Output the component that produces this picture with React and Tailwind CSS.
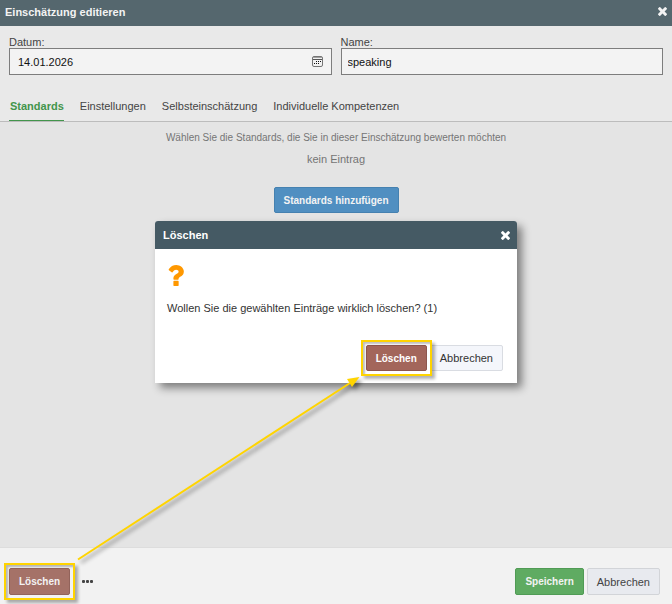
import React from "react";

function CloseIcon() {
  return (
    <svg viewBox="302 366 1188 1188" className="size-[9px]" fill="currentColor" aria-hidden="true">
      <path d="M1490 1322q0 40-28 68l-136 136q-28 28-68 28t-68-28l-294-294-294 294q-28 28-68 28t-68-28l-136-136q-28-28-28-68t28-68l294-294-294-294q-28-28-28-68t28-68l136-136q28-28 68-28t68 28l294 294 294-294q28-28 68-28t68 28l136 136q28 28 28 68t-28 68l-294 294 294 294q28 28 28 68z" />
    </svg>
  );
}

function QuestionIcon() {
  return (
    <svg viewBox="384 256 1024 1280" className="h-[21px] w-[17px] text-[#ff9800]" fill="currentColor" aria-hidden="true">
      <path d="M1088 1256v240q0 16-12 28t-28 12h-240q-16 0-28-12t-12-28v-240q0-16 12-28t28-12h240q16 0 28 12t12 28zm316-600q0 54-15.5 101t-35 76.5-55 59.5-57.5 43.5-61 35.5q-41 23-68.5 65t-27.5 67q0 17-12 32.5t-28 15.5h-240q-15 0-25.5-18.5t-10.5-37.5v-45q0-83 65-156.5t143-108.5q59-27 84-56t25-76q0-42-46.5-74t-107.5-32q-65 0-108 29-35 25-107 115-13 16-31 16-12 0-25-8l-164-125q-13-10-15.5-25t5.5-28q160-266 464-266 80 0 161 31t146 83 106 127.5 41 158.5z" />
    </svg>
  );
}

function CalendarIcon() {
  return (
    <svg viewBox="0 0 11 11" className="size-[11px]" aria-hidden="true">
      <rect x="0.5" y="0.5" width="10" height="10" rx="1.5" fill="#f2f2f2" stroke="#757575" />
      <path d="M1 1.5h9" stroke="#a0a0a0" />
      <path d="M1 3.5h9" stroke="#555" />
      <path d="M4 5.5h1M6 5.5h1M8 5.5h1M2 7.5h1M4 7.5h1M6 7.5h1" stroke="#111" />
    </svg>
  );
}

function Highlight({ children }) {
  return (
    <div className="relative">
      {children}
      <span className="pointer-events-none absolute -inset-[5px] border-2 border-[#ffd400] shadow-[3px_3px_3px_rgba(0,0,0,0.3),inset_2px_2px_2px_rgba(0,0,0,0.25)]" />
    </div>
  );
}

const button = "rounded-[2px] border px-[9px] leading-4";
const filled = `${button} pt-px text-[10px] font-bold`;
const field = "h-[27px] w-full border border-[#7d7d7d] bg-[#f3f3f3] text-[11px] text-[#111] outline-none";

const tabs = ["Standards", "Einstellungen", "Selbsteinschätzung", "Individuelle Kompetenzen"];

export default function App() {
  return (
    <div className="relative flex min-h-screen flex-col bg-[#e9e9e9] font-['Liberation_Sans',Arial,sans-serif] text-[11px] leading-4 text-[#444]">
      <header className="flex h-[26px] items-center justify-between bg-[#55676e] pr-[5px] pb-[3px] pl-[5px] text-[#f3f3f3]">
        <h1 className="font-bold">Einschätzung editieren</h1>
        <button type="button" aria-label="Schließen"><CloseIcon /></button>
      </header>

      <form className="grid grid-cols-2 gap-[9px] px-[9px] pt-[9px]">
        <div>
          <label htmlFor="datum" className="block h-[13px] leading-[14px]">Datum:</label>
          <div className="relative">
            <input id="datum" defaultValue="14.01.2026" className={`${field} pr-8 pl-2`} />
            <button type="button" aria-label="Kalender öffnen" className="absolute top-2 right-[9px]"><CalendarIcon /></button>
          </div>
        </div>
        <div>
          <label htmlFor="name" className="block h-[13px] leading-[14px]">Name:</label>
          <input id="name" defaultValue="speaking" className={`${field} px-[6px]`} />
        </div>
      </form>

      <nav className="mt-[23px] flex h-6 gap-4 border-b border-[#bcbcbc] px-[9px]">
        {tabs.map((tab, i) => (
          <a key={tab} href="#" className={i === 0 ? "h-[23px] border-b border-[#43954c] pl-px font-bold text-[#43954c]" : "h-[23px]"}>
            {tab}
          </a>
        ))}
      </nav>

      <main className="flex flex-1 flex-col items-center border-b border-[#dddddd] bg-[#e4e4e4] pt-2 text-[#757575]">
        <p className="text-[10px]">Wählen Sie die Standards, die Sie in dieser Einschätzung bewerten möchten</p>
        <p className="mt-[5px]">kein Eintrag</p>
        <button type="button" className={`${filled} mt-5 h-[26px] border-[#4581b0] bg-[#508fc1] text-[#f3f3f3]`}>Standards hinzufügen</button>
      </main>

      <footer className="flex h-14 items-center justify-between bg-[#f2f2f2] pt-3 pr-3 pb-[1px] pl-[9px]">
        <div className="flex items-center gap-3">
          <Highlight>
            <button type="button" className={`${filled} h-[27px] border-[#92635b] bg-[#a57268] text-[#f3f3f3]`}>Löschen</button>
          </Highlight>
          <button type="button" aria-label="Mehr" className="flex gap-px">
            <span className="size-[3px] rounded-[1px] bg-[#444]" />
            <span className="size-[3px] rounded-[1px] bg-[#444]" />
            <span className="size-[3px] rounded-[1px] bg-[#444]" />
          </button>
        </div>
        <div className="flex gap-[3px]">
          <button type="button" className={`${filled} h-[27px] border-[#509b55] bg-[#5fab62] text-[#f3f3f3]`}>Speichern</button>
          <button type="button" className={`${button} h-[27px] border-[#d2d4d8] bg-[#e8eaef]`}>Abbrechen</button>
        </div>
      </footer>

      <div className="absolute inset-0 flex items-center justify-center">
        <section role="dialog" aria-labelledby="dialog-title" className="w-[362px] rounded-t-[3px] bg-white text-[#333] shadow-[5px_5px_8px_rgba(0,0,0,0.45)]">
          <div className="flex h-7 items-center justify-between rounded-t-[3px] bg-[#455a64] pr-[7px] pl-2 text-white">
            <h2 id="dialog-title" className="font-bold">Löschen</h2>
            <button type="button" aria-label="Dialog schließen"><CloseIcon /></button>
          </div>
          <div className="px-3 pt-4">
            <QuestionIcon />
            <p className="mt-[14px]">Wollen Sie die gewählten Einträge wirklich löschen? (1)</p>
          </div>
          <div className="flex justify-end gap-[3px] pt-[29px] pr-[14px] pb-3">
            <Highlight>
              <button type="button" className={`${filled} h-[26px] border-[#8d564e] bg-[#a3665b] text-white`}>Löschen</button>
            </Highlight>
            <button type="button" className={`${button} h-[26px] border-[#d9dce2] bg-[#f4f6fb]`}>Abbrechen</button>
          </div>
        </section>
      </div>

      <svg viewBox="0 0 672 604" className="pointer-events-none absolute inset-0 size-full" aria-hidden="true">
        <g className="drop-shadow-[3px_3px_2px_rgba(0,0,0,0.45)]">
          <path d="M78 559.5L350 383" stroke="#ffd400" strokeWidth="2" />
          <path d="M359.5 377L347 379L352 387Z" fill="#ffd400" />
        </g>
      </svg>
    </div>
  );
}
